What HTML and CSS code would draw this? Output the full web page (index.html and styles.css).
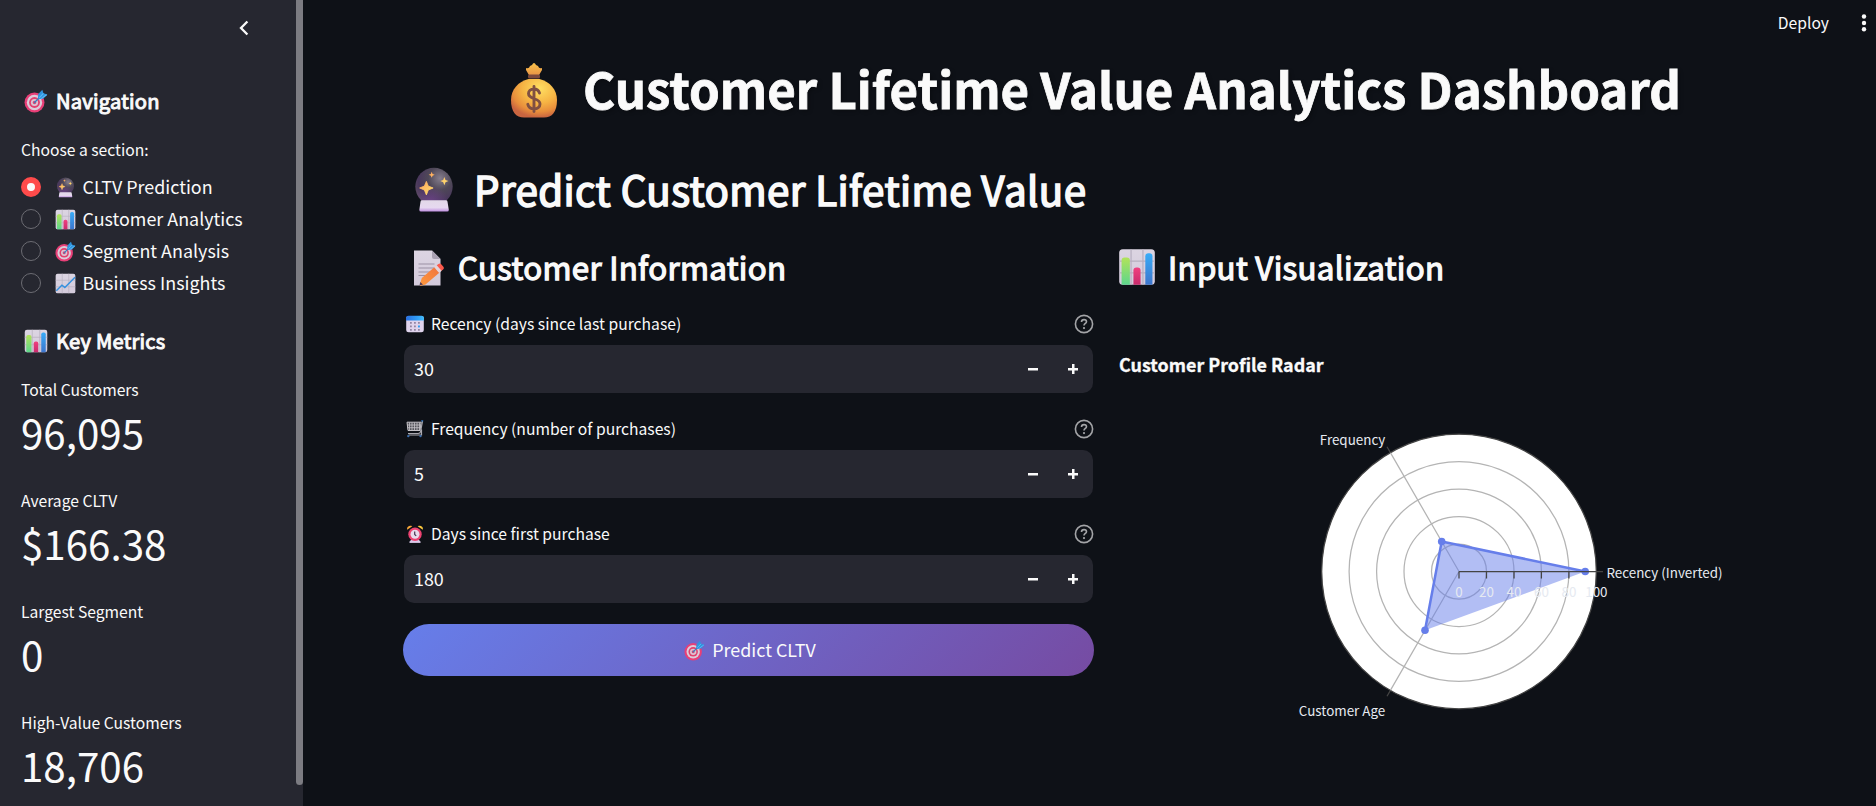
FILE: index.html
```html
<!DOCTYPE html>
<html lang="en">
<head>
<meta charset="utf-8">
<title>Customer Lifetime Value Analytics Dashboard</title>
<link rel="stylesheet" href="styles.css">
</head>
<body>
<svg class="sprite" width="0" height="0" aria-hidden="true">
  <defs>
    <linearGradient id="g-paper" x1="0" y1="0" x2="0" y2="1"><stop offset="0" stop-color="#dcd5e2"/><stop offset="1" stop-color="#d3cadb"/></linearGradient>
    <linearGradient id="g-green" x1="0" y1="0" x2="0" y2="1"><stop offset="0" stop-color="#b2e35a"/><stop offset="1" stop-color="#5cd68c"/></linearGradient>
    <linearGradient id="g-pink" x1="0" y1="0" x2="0" y2="1"><stop offset="0" stop-color="#f0407f"/><stop offset="1" stop-color="#c92a6c"/></linearGradient>
    <linearGradient id="g-blue" x1="0" y1="0" x2="0" y2="1"><stop offset="0" stop-color="#38acf8"/><stop offset="1" stop-color="#3d75cc"/></linearGradient>
    <radialGradient id="g-bag" cx=".62" cy=".25" r=".75"><stop offset="0" stop-color="#ffdf62"/><stop offset=".5" stop-color="#f6b444"/><stop offset=".8" stop-color="#e88e3c"/><stop offset="1" stop-color="#c96540"/></radialGradient>
    <linearGradient id="g-bagtop" x1="0" y1="0" x2="0" y2="1"><stop offset="0" stop-color="#f9c24c"/><stop offset="1" stop-color="#e89244"/></linearGradient>
    <radialGradient id="g-ball" cx=".66" cy=".28" r=".78"><stop offset="0" stop-color="#857d8c"/><stop offset=".4" stop-color="#4f4858"/><stop offset=".75" stop-color="#49375c"/><stop offset="1" stop-color="#5a4a60"/></radialGradient>
    <radialGradient id="g-glow" cx=".4" cy=".95" r=".5"><stop offset="0" stop-color="#6c4487"/><stop offset="1" stop-color="#6c4487" stop-opacity="0"/></radialGradient>
    <linearGradient id="g-base" x1="0" y1="0" x2="0" y2="1"><stop offset="0" stop-color="#e2d9e8"/><stop offset=".65" stop-color="#e6d8f0"/><stop offset="1" stop-color="#bf8fe0"/></linearGradient>
    <linearGradient id="g-star" x1="0" y1="0" x2="1" y2="1"><stop offset="0" stop-color="#ffa65c"/><stop offset="1" stop-color="#ffe070"/></linearGradient>
    <linearGradient id="g-pencil" x1="0" y1="1" x2="1" y2="0"><stop offset="0" stop-color="#ff9a3c"/><stop offset="1" stop-color="#ef7340"/></linearGradient>
    <linearGradient id="g-cal" x1="0" y1="0" x2="1" y2="0"><stop offset="0" stop-color="#2a6fe0"/><stop offset=".6" stop-color="#2f9cf6"/><stop offset="1" stop-color="#44bdfb"/></linearGradient>
  </defs>
  <symbol id="i-target" viewBox="0 0 32 32">
    <circle cx="14" cy="18" r="13.3" fill="#e83f77"/>
    <circle cx="14" cy="18" r="10.2" fill="#dccbd9"/>
    <circle cx="14" cy="18" r="7.2" fill="#e2416f"/>
    <circle cx="14" cy="18" r="4.8" fill="#dac5d3"/>
    <circle cx="14" cy="18" r="2.3" fill="#db4772"/>
    <path d="M14 18 22 10" stroke="#347fc3" stroke-width="1.8" stroke-linecap="round"/>
    <path d="M18.5 12 19 6.8 24.4 1l1.5 4.8L31.2 7.4 26 12.8l-5.700.8z" fill="#2f94df"/>
    <path d="M20.3 11.7 25.9 5.8M22.5 13.2 30.2 7.6" stroke="#58b9f5" stroke-width="1.5"/>
  </symbol>
  <symbol id="i-bars" viewBox="0 0 32 32">
    <rect x="1" y="1" width="30" height="30" rx="3" fill="url(#g-paper)"/>
    <path d="M11 1v30M21 1v30M1 11h30M1 21h30" stroke="#b7afbf" stroke-width="1"/>
    <path d="M3 10.5Q3 8 5.500 8h2Q10 8 10 10.500V31H4Q3 31 3 30z" fill="url(#g-green)"/>
    <path d="M13 19Q13 16.500 15.500 16.500h1Q19 16.500 19 19V31h-6z" fill="url(#g-pink)"/>
    <path d="M23 7Q23 4.500 25.500 4.500h1Q29 4.500 29 7V30.500Q29 31 28 31h-5z" fill="url(#g-blue)"/>
  </symbol>
  <symbol id="i-trend" viewBox="0 0 32 32">
    <rect x="1" y="1" width="30" height="30" rx="3" fill="url(#g-paper)"/>
    <path d="M11 1v30M21 1v30M1 11h30M1 21h30" stroke="#b7afbf" stroke-width="1"/>
    <path d="M2 27 10.500 18.500 15 22 30.500 6.500" fill="none" stroke="#3491df" stroke-width="2.200"/>
  </symbol>
  <symbol id="i-ball" viewBox="0 0 32 32">
    <circle cx="16" cy="13.600" r="13" fill="url(#g-ball)"/>
    <circle cx="16" cy="13.600" r="13" fill="url(#g-glow)"/>
    <path d="M7.600 23.200h16.800q.9 0 1 .9l.9 5.600q.1 1.300-1.200 1.300H7q-1.300 0-1.200-1.300l.8-5.600q.1-.9 1-.9z" fill="url(#g-base)"/>
    <path d="M10.700 10 12 13.300 15.400 14.600 12 16 10.700 19.400 9.300 16 6 14.600 9.300 13.300z" fill="url(#g-star)" stroke="url(#g-star)" stroke-width=".6"/>
    <path d="M23.200 6.900 24 9l2 .8-2 .8-.8 2.100-.8-2.100-2-.8 2-.8zM14.400 3.300l.6 1.500 1.500.6-1.500.6-.6 1.500-.6-1.500-1.500-.6 1.500-.6z" fill="url(#g-star)"/>
  </symbol>
  <symbol id="i-bag" viewBox="0 0 46 55">
    <path d="M15 5q3 1 4-2l2-1q2-4 4 0l2 1q1 3 4 2v2l-3.500 6h-9L15 7z" fill="url(#g-bagtop)"/>
    <path d="M17.500 16h11C39 18.500 46 27 46 37c0 12-5 17.500-13 17.500H13C5 54.500 0 49 0 37 0 27 7 18.500 17.500 16z" fill="url(#g-bag)"/>
    <rect x="17" y="11.500" width="12" height="4" rx="1.500" fill="#7d4a3d"/>
    <path d="M28.500 30c-1-3-3.200-4-5.500-4-3.500 0-5.500 2-5.500 4.500 0 6.500 11.500 4 11.500 10.500 0 3-2.500 4.800-6 4.800s-5.500-1.800-6.200-4.500M23 23.500v25" fill="none" stroke="#805042" stroke-width="2.900" stroke-linecap="round"/>
  </symbol>
  <symbol id="i-memo" viewBox="0 0 31 36">
    <path d="M1 .5h18l8.500 8.500v26.500H1z" fill="url(#g-paper)"/>
    <path d="M19 .5 27.500 9H21q-2 0-2-2z" fill="#aaa2b3"/>
    <path d="M5.500 14h16M5.500 18h18M5.500 22h14M5.500 25.500h9" stroke="#9b91a4" stroke-width="1"/>
    <path d="M7 34l1.800-6L21.600 17l5 5.500L12.500 34.500 7 36z" fill="url(#g-pencil)"/>
    <path d="M21.200 17.300 24 15l5 5.500-2.800 2.400z" fill="#e4d4da"/>
    <path d="M23.700 15.200l1.800-1.300q1.500-.8 2.700.4l2.200 2.500q1 1.500-.1 2.500l-1.700 1.400z" fill="#fb5a4c"/>
    <path d="M6.500 35.500 7.300 32l2.700 2.500z" fill="#5b4056"/>
  </symbol>
  <symbol id="i-calendar" viewBox="0 0 18 17">
    <rect x=".2" y=".5" width="17.600" height="16.300" rx="2.500" fill="#dfd3ec"/>
    <path d="M0 5V2.500Q0 .2 2.500.2h13Q18 .2 18 2.500V5z" fill="url(#g-cal)"/>
    <path d="M4 6.500h1.800v1.800H4zm4 0h1.800v1.800H8zm4 0h1.800v1.800H12zM4 10h1.800v1.800H4zm4 0h1.800v1.800H8zm-4 3.500h1.800v1.800H4zm4 0h1.800v1.800H8zm4 0h1.800v1.800H12z" fill="#9285a3"/>
    <rect x="12" y="10" width="1.900" height="1.900" fill="#2b9cf3"/>
  </symbol>
  <symbol id="i-cart" viewBox="0 0 18 17">
    <path d="M1 1.700h14.200L14 10H2z" fill="#55555c" stroke="#c5c3c8" stroke-width="1"/>
    <path d="M3.500 2v8M6 2v8M8.500 2v8M11 2v8M13.500 2v8M1 4.500h14M1.500 7.200h13" stroke="#c5c3c8" stroke-width=".8"/>
    <path d="M16.500.7 14.600 11q-.3 2-2.500 2H2M15.500 9v5.500H2.500" fill="none" stroke="#aaa9b0" stroke-width="1.200"/>
    <path d="M15.200.4h2" stroke="#347cc8" stroke-width="1.200"/>
    <circle cx="2.300" cy="15.600" r="1.200" fill="#3c6fae"/><circle cx="14.500" cy="15.600" r="1.200" fill="#3c6fae"/>
  </symbol>
  <symbol id="i-clock" viewBox="0 0 18 18">
    <path d="M3.600 17.500 5 14.500h8l1.400 3z" fill="#d5c4e6"/>
    <path d="M1.200 4.800C.5 2 3-.2 6.300 1.200z" fill="#f9a83a"/><path d="M16.800 4.800C17.500 2 15-.2 11.700 1.200z" fill="#fbc93d"/>
    <circle cx="9" cy="9.300" r="6.700" fill="#ee4271"/><circle cx="9" cy="9.300" r="4.500" fill="#e8dcec"/>
    <path d="M8.700 6.500v3l1.500 1.400" stroke="#4a3552" stroke-width="1.200" fill="none"/>
    <path d="M3.500 16.300h11v1.500h-11z" fill="#dfcdec"/>
  </symbol>
  <symbol id="i-help" viewBox="0 0 20 20">
    <circle cx="10" cy="10" r="8.600" fill="none" stroke="#a3a4a7" stroke-width="1.600"/>
    <path d="M7.500 7.900C7.500 6.400 8.600 5.600 10 5.600s2.500.9 2.500 2.100c0 1.700-2.500 1.800-2.500 3.900" fill="none" stroke="#a3a4a7" stroke-width="1.600"/>
    <circle cx="10" cy="14.100" r="1.100" fill="#a3a4a7"/>
  </symbol>
</svg>

<div class="app">
  <aside class="sidebar">
    <div class="sidebar-body">
      <div class="sidebar-head">
        <svg class="chevron" viewBox="0 0 10 16"><path d="M8.400 1.500 2 8l6.400 6.500" fill="none" stroke="#fafafa" stroke-width="2.300"/></svg>
      </div>
      <h3 class="side-title"><svg class="side-emoji"><use href="#i-target"/></svg><span>Navigation</span></h3>
      <p class="small choose">Choose a section:</p>
      <ul class="radios">
        <li><span class="radio on"></span><svg><use href="#i-ball"/></svg>CLTV Prediction</li>
        <li><span class="radio"></span><svg><use href="#i-bars"/></svg>Customer Analytics</li>
        <li><span class="radio"></span><svg><use href="#i-target"/></svg>Segment Analysis</li>
        <li><span class="radio"></span><svg><use href="#i-trend"/></svg>Business Insights</li>
      </ul>
      <h3 class="side-title metrics-title"><svg class="side-emoji"><use href="#i-bars"/></svg><span>Key Metrics</span></h3>
      <div class="metrics">
        <div><p class="small">Total Customers</p><p class="value">96,095</p></div>
        <div><p class="small">Average CLTV</p><p class="value">$166.38</p></div>
        <div><p class="small">Largest Segment</p><p class="value">0</p></div>
        <div><p class="small">High-Value Customers</p><p class="value">18,706</p></div>
      </div>
    </div>
    <div class="scroll"></div>
  </aside>

  <main class="main">
    <header class="toolbar">
      <span>Deploy</span>
      <svg class="dots" viewBox="0 0 6 18"><g fill="#fafafa"><circle cx="3" cy="2.500" r="2.200"/><circle cx="3" cy="9" r="2.200"/><circle cx="3" cy="15.300" r="2.200"/></g></svg>
    </header>
    <h1 class="title"><svg class="bag"><use href="#i-bag"/></svg><span>Customer Lifetime Value Analytics Dashboard</span></h1>
    <h2 class="heading"><svg class="ball"><use href="#i-ball"/></svg><span>Predict Customer Lifetime Value</span></h2>
    <div class="columns">
      <section class="form">
        <h3 class="subheading"><svg class="memo"><use href="#i-memo"/></svg><span>Customer Information</span></h3>
        <div class="field">
          <div class="label"><svg class="mini"><use href="#i-calendar"/></svg><span>Recency (days since last purchase)</span><svg class="help"><use href="#i-help"/></svg></div>
          <div class="input"><span>30</span><i class="minus"></i><i class="plus"></i></div>
        </div>
        <div class="field">
          <div class="label"><svg class="mini"><use href="#i-cart"/></svg><span>Frequency (number of purchases)</span><svg class="help"><use href="#i-help"/></svg></div>
          <div class="input"><span>5</span><i class="minus"></i><i class="plus"></i></div>
        </div>
        <div class="field">
          <div class="label"><svg class="mini"><use href="#i-clock"/></svg><span>Days since first purchase</span><svg class="help"><use href="#i-help"/></svg></div>
          <div class="input"><span>180</span><i class="minus"></i><i class="plus"></i></div>
        </div>
        <div class="button"><svg><use href="#i-target"/></svg><span>Predict CLTV</span></div>
      </section>
      <section class="viz">
        <h3 class="subheading"><svg class="bars"><use href="#i-bars"/></svg><span>Input Visualization</span></h3>
        <p class="chart-title">Customer Profile Radar</p>
        <svg class="radar" viewBox="1119 410 691 320">
          <circle cx="1459" cy="571.500" r="137.300" fill="#fff" stroke="#444" stroke-width="1.250"/>
          <g fill="none" stroke="#b4b4b4" stroke-width="1.250">
            <circle cx="1459" cy="571.500" r="27.500"/><circle cx="1459" cy="571.500" r="55"/><circle cx="1459" cy="571.500" r="82.400"/><circle cx="1459" cy="571.500" r="109.900"/>
            <path d="M1459 571.500 1390.400 452.600M1459 571.500 1390.400 690.400"/>
          </g>
          <path d="M1390.400 452.600 1387 446.700M1390.400 690.400 1387 696.300M1596 571.500h7" stroke="#444" stroke-width="1.250"/>
          <path d="M1585.200 571.500 1441.700 541.500 1425 630.300z" fill="#667eea" fill-opacity=".5"/>
          <path d="M1585.200 571.500 1441.700 541.500 1425 630.300" fill="none" stroke="#667eea" stroke-width="2.500" stroke-linejoin="round"/>
          <g fill="#667eea"><circle cx="1585.200" cy="571.500" r="3.800"/><circle cx="1441.700" cy="541.500" r="3.800"/><circle cx="1425" cy="630.300" r="3.800"/></g>
          <path d="M1459 571.500h137.500M1459 571.500v7M1486.500 571.500v7M1514 571.500v7M1541.400 571.500v7M1568.900 571.500v7" stroke="#444" stroke-width="1.250"/>
          <g class="ticks"><text x="1459" y="596.500">0</text><text x="1486.500" y="596.500">20</text><text x="1514" y="596.500">40</text><text x="1541.400" y="596.500">60</text><text x="1568.900" y="596.500">80</text><text x="1596.400" y="596.500">100</text></g>
          <g class="axes"><text x="1319.800" y="444.500">Frequency</text><text x="1298.800" y="715.500">Customer Age</text><text x="1606.500" y="577.500">Recency (Inverted)</text></g>
        </svg>
      </section>
    </div>
  </main>
</div>
</body>
</html>
```
FILE: styles.css
```css
* { box-sizing: border-box; }
body {
  margin: 0;
  background: #0e1117;
  color: #fafafa;
  font-family: "Noto Sans CJK JP", "Noto Sans CJK SC", "Open Sans", sans-serif;
  font-size: 17.9px;
  overflow: hidden;
}
h1, h2, h3, p, ul { margin: 0; padding: 0; font-weight: 400; white-space: nowrap; }
svg { flex: none; display: block; }
.sprite { position: absolute; }
.app { display: flex; height: 806px; }

.sidebar { width: 303px; flex: none; display: flex; background: #262730; overflow: hidden; }
.sidebar-body { width: 296px; padding-left: 21px; }
.scroll { width: 7px; height: 785px; background: #7c7c82; border-radius: 0 0 4px 4px; }
.sidebar-head { height: 85px; padding: 20px 0 0 218px; }
.chevron { width: 10px; height: 16px; }
.side-title { display: flex; height: 30px; line-height: 32px; font-size: 20.1px; }
.side-emoji { width: 24px; height: 24px; margin: 4px 8px 0 3px; }
.small { font-size: 15.67px; line-height: 26px; height: 24px; }
.choose { margin: 22px 0 9px; }
.radios { list-style: none; }
.radios li { display: flex; align-items: center; height: 32px; line-height: 32px; }
.radios svg { width: 21px; height: 21px; margin: 2px 7px 0 13.5px; }
.radio { width: 20px; height: 20px; margin-top: 2px; border: 1px solid #6c6c73; border-radius: 50%; }
.radio.on { border: 6px solid #ff4b4b; background: #fafafa; }
.metrics-title { margin: 27px 0 22px; }
.metrics { display: flex; flex-direction: column; gap: 29px; }
.value { margin-top: 3px; font-size: 40.3px; line-height: 56px; height: 55px; }

.main { flex: 1; min-width: 0; padding: 0 66px 0 100px; }
.toolbar { display: flex; justify-content: flex-end; height: 55px; margin-right: -57px; padding-top: 10px; font-size: 15.67px; line-height: 26px; }
.dots { width: 6px; height: 18px; margin: 4px 0 0 32px; }
.title { display: flex; height: 65px; line-height: 65px; padding-left: 108px; font-size: 49.2px; font-weight: 700; text-shadow: 2px 2px 4px rgba(0, 0, 0, .3); }
.title span { -webkit-text-stroke: .8px #fafafa; }
.bag { width: 46px; height: 55px; margin: 8px 26px 0 0; }
.heading span, .subheading span { -webkit-text-stroke: .04em #fafafa; letter-spacing: .01em; }
.side-title span { -webkit-text-stroke: .05em #fafafa; letter-spacing: .012em; }
.heading { display: flex; height: 53px; line-height: 53px; margin-top: 42px; padding-left: 9px; font-size: 40.3px; }
.ball { width: 46px; height: 46px; margin: 5px 17px 0 -1px; }
.columns { display: flex; gap: 25px; margin-top: 31px; }
.form, .viz { width: 691px; flex: none; }
.subheading { display: flex; height: 41px; line-height: 41px; font-size: 31.3px; }
.memo { width: 31px; height: 36px; margin: 4px 14px 0 10px; }
.bars { width: 38px; height: 38px; margin: 2px 12px 0 -1px; }
.subheading + .field { margin-top: 24px; }
.field { margin-bottom: 23px; }
.label { display: flex; height: 24px; line-height: 26px; font-size: 15.67px; }
.mini { width: 18px; height: 18px; margin: 4px 7px 0 3px; }
.help { width: 20px; height: 20px; margin: 3px 0 0 auto; }
.input { display: flex; align-items: center; height: 48px; margin: 10px 1px 0; padding: 0 15px 0 10px; border-radius: 10px; background: #262730; line-height: 47px; }
.input span { flex: 1; height: 48px; }
.minus, .plus { position: relative; width: 10px; height: 10px; background: linear-gradient(#fafafa, #fafafa) center / 10px 2.500px no-repeat; }
.minus { margin-right: 30px; }
.plus { background: linear-gradient(#fafafa, #fafafa) center / 10px 2.500px no-repeat, linear-gradient(#fafafa, #fafafa) center / 2.500px 10px no-repeat; }
.button { display: flex; justify-content: center; height: 52px; line-height: 51px; margin-top: -2px; padding-left: 3px; border-radius: 26px; background: linear-gradient(135deg, #667eea 0%, #764ba2 100%); }
.button svg { width: 21px; height: 21px; margin: 16px 7px 0 0; }
.chart-title { margin-top: 65px; height: 24px; line-height: 24px; font-size: 17.9px; font-weight: 700; -webkit-text-stroke: .3px #fafafa; }
.radar { width: 691px; height: 320px; margin-top: 34px; }
.ticks, .axes { font-size: 13.4px; fill: #e6eaf1; }
.ticks { text-anchor: middle; }
```
